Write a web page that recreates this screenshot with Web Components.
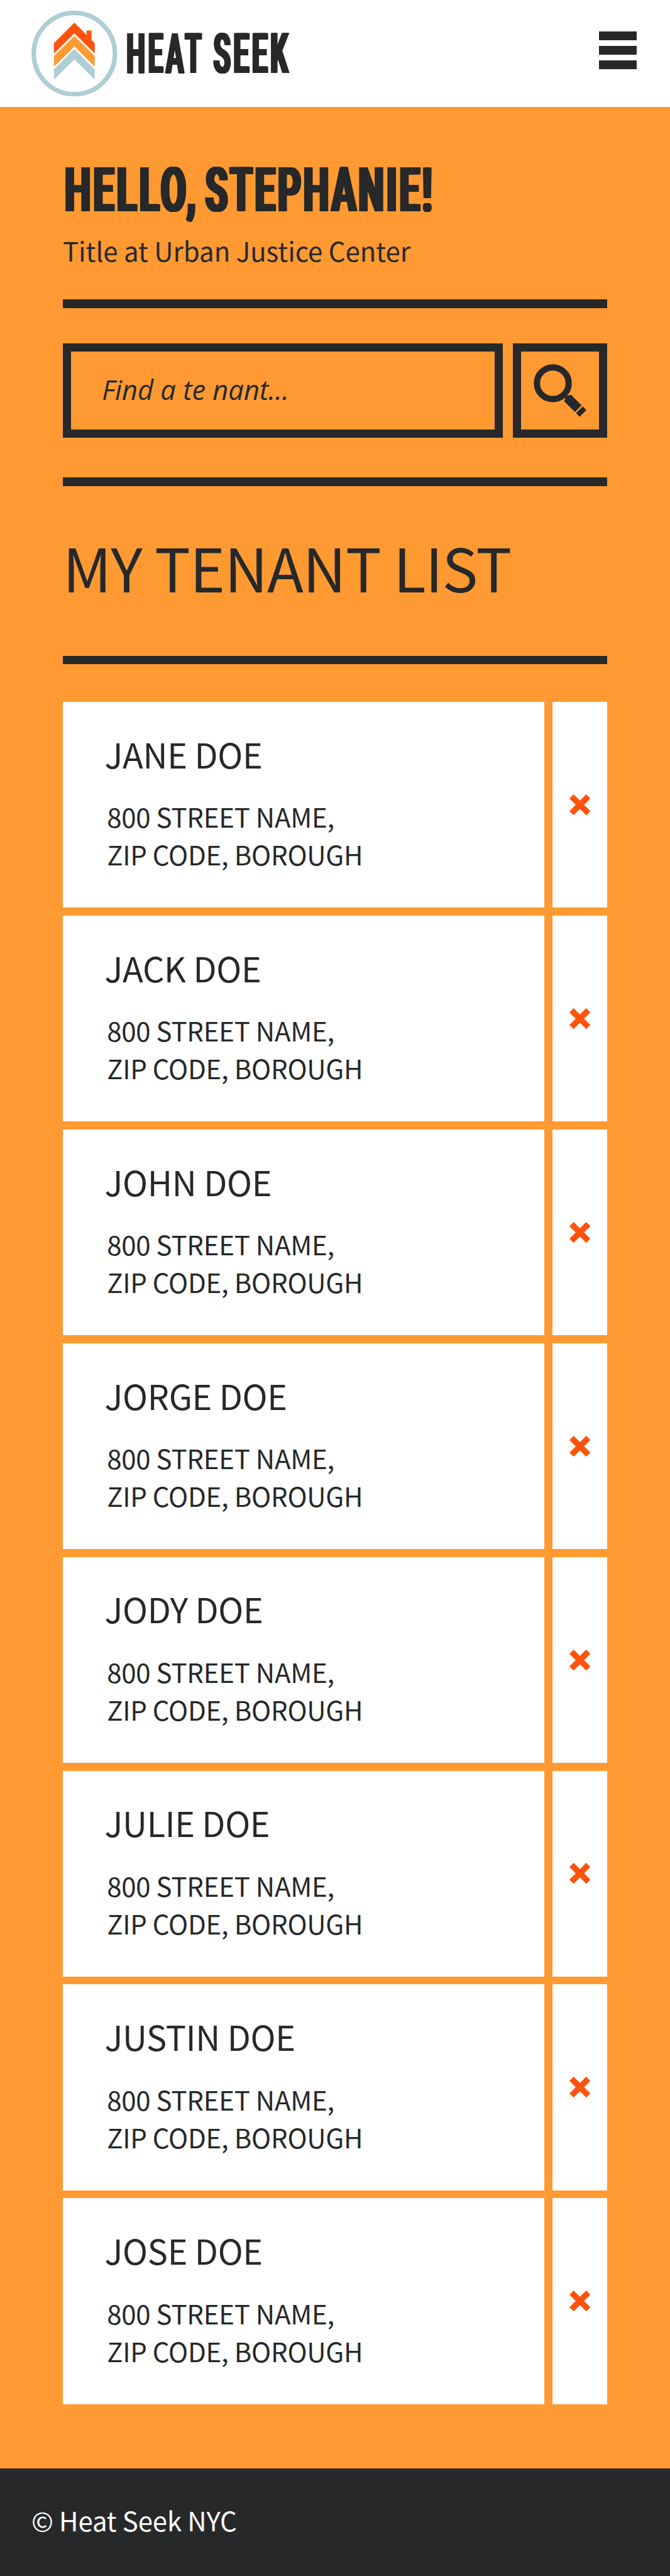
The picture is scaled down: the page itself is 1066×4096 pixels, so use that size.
<!DOCTYPE html>
<html lang="en">
<head>
<meta charset="utf-8">
<title>Heat Seek</title>
<style>
/* .1rem is one unit of a 320-unit wide mobile layout */
html{font-size:33.3125px;--ink:#262829;--orange:#ff9a32;--red:#ff530d;--blue:#afcdd5}
body{margin:0;background:var(--orange);color:var(--ink);font-family:"Noto Sans CJK SC","Source Sans Pro","Open Sans",sans-serif}
</style>
</head>
<body>
<heat-app></heat-app>
<script>
function define(name, html, setup) {
  customElements.define(name, class extends HTMLElement {
    connectedCallback() {
      if (this.shadowRoot) return;
      const t = document.createElement('template');
      t.innerHTML = html;
      this.attachShadow({mode: 'open'}).append(t.content.cloneNode(true));
      if (setup) setup(this, this.shadowRoot);
    }
  });
}

/* Text squeezed so its ink fills the host's width, its baseline on the host's bottom edge */
define('fit-text', `<style>
:host{display:block;white-space:nowrap;flex:none}
span{display:block;width:max-content;line-height:1;transform-origin:0 0;text-shadow:var(--thicken,none)}
</style><span></span>`, (el, root) => {
  const u = 3.33125, s = root.querySelector('span'), text = el.getAttribute('text');
  s.textContent = text;
  const w = el.getAttribute('w') * u, cap = el.getAttribute('cap') * u;
  el.style.width = w + 'px';
  el.style.height = cap + 'px';
  const cs = getComputedStyle(el);
  const ctx = document.createElement('canvas').getContext('2d');
  ctx.font = `${cs.fontStyle} ${cs.fontWeight} 100px ${cs.fontFamily}`;
  const size = cap / ctx.measureText('H').actualBoundingBoxAscent * 100;
  s.style.fontSize = size + 'px';
  const m = ctx.measureText(text), k = size / 100;
  const extra = +(el.getAttribute('extra') || 0), ls = +(el.getAttribute('spacing') || 0);
  s.style.letterSpacing = ls + 'px';
  const ink = (m.actualBoundingBoxLeft + m.actualBoundingBoxRight) * k + 2 * extra + ls * (text.length - 1);
  const sx = w / ink;
  const base = size / 2 + (m.fontBoundingBoxAscent - m.fontBoundingBoxDescent) * k / 2;
  s.style.transform = `translate(${(m.actualBoundingBoxLeft * k + extra) * sx}px,${cap - base}px) scaleX(${sx})`;
});

define('heat-logo', `<style>
:host{display:flex;align-items:flex-start}
svg{width:4.1rem;height:4.1rem;display:block}
.name{display:flex;gap:.5rem;padding:1.1rem 0 0 .475rem;font-family:Roboto,sans-serif;font-weight:700;--thicken:3.8px 0 currentColor,-3.8px 0 currentColor,1.9px 0 currentColor,-1.9px 0 currentColor}
</style>
<svg viewBox="62.5 20.8 170.8 170.8">
<circle cx="147.9" cy="106.2" r="80.8" fill="none" stroke="var(--blue)" stroke-width="9.1"/>
<path fill="var(--red)" d="M148 44.7 172.3 69V60.3H182.1V79L188.4 85.3V105.7L148 65.7 107.3 105.7V85.3Z"/>
<path fill="var(--orange)" d="M148 71 188.4 111V132L148 92 107.3 132V111Z"/>
<path fill="var(--blue)" d="M148 96.8 188.4 137.3V157.8L148 117.6 107.3 157.8V137.3Z"/>
</svg>
<div class="name"><fit-text text="HEAT" w="36" cap="19.05" extra="3.8" spacing="10"></fit-text><fit-text text="SEEK" w="36.6" cap="19.05" extra="3.8" spacing="9"></fit-text></div>`);

define('menu-button', `<style>
:host{display:flex;flex-direction:column;gap:.28rem;width:1.81rem}
i{display:block;height:.42rem;background:var(--ink)}
</style><i></i><i></i><i></i>`);

define('site-header', `<style>
:host{display:flex;justify-content:space-between;align-items:flex-start;box-sizing:border-box;height:5.1rem;padding:.5rem 1.58rem 0 1.5rem;background:#fff}
menu-button{margin-top:.99rem}
</style><heat-logo></heat-logo><menu-button></menu-button>`);

define('thick-rule', `<style>:host{display:block;height:.4rem;background:var(--ink)}</style>`);

define('user-greeting', `<style>
:host{display:block}
h1{display:flex;gap:.451rem;margin:0 0 .943rem .112rem;font:700 16px Roboto,sans-serif;--thicken:4.4px 0 currentColor,-4.4px 0 currentColor,2.2px 0 currentColor,-2.2px 0 currentColor}
p{margin:0;font-size:1.26rem;line-height:1.8rem}
</style>
<h1><fit-text text="HELLO," w="62.1" cap="21.13" extra="4.4" spacing="7.5"></fit-text><fit-text text="STEPHANIE!" w="108.4" cap="21.13" extra="4.4" spacing="7"></fit-text></h1>
<p><slot></slot></p>`);

define('tenant-search', `<style>
:host{display:flex;gap:.5rem}
div{box-sizing:border-box;height:4.5rem;border:.4rem solid var(--ink)}
.field{width:21rem;padding:1.365rem 0 0 1.545rem;font-family:"Open Sans",sans-serif;font-style:italic}
.go{width:4.5rem;display:flex;align-items:center;justify-content:center}
svg{width:2.52rem;height:2.52rem;display:block}
</style>
<div class="field"><fit-text text="Find a te nant..." w="87.4" cap="9.3"></fit-text></div>
<div class="go"><svg viewBox="186 164 315 315" fill="var(--ink)">
<circle cx="300.5" cy="278" r="94.7" fill="none" stroke="var(--ink)" stroke-width="37.5"/>
<path d="M370 357 386 353 410 347 472 410 433 450 369 386 375 363ZM480 416 501 438 461 478 439 456Z"/></svg></div>`);

define('remove-button', `<style>
:host{display:flex;align-items:center;justify-content:center;background:#fff;width:2.6rem}
svg{width:1rem;height:1rem;display:block}
</style><svg viewBox="0 0 10 10"><path fill="var(--red)" d="M2 0 5 3 8 0 10 2 7 5 10 8 8 10 5 7 2 10 0 8 3 5 0 2Z"/></svg>`);

define('tenant-card', `<style>
:host{display:flex;gap:.4rem;height:9.82rem}
article{box-sizing:border-box;width:23rem;background:#fff;padding:1.285rem 0 0 2rem}
h3{margin:0;font-weight:400;font-size:1.62rem;line-height:2.4rem;letter-spacing:-.006em}
p{margin:.89rem 0 0 .11rem;font-size:1.26rem;line-height:1.8rem;letter-spacing:-.0055em}
</style><article><h3><slot></slot></h3><p>800 STREET NAME,<br>ZIP CODE, BOROUGH</p></article><remove-button></remove-button>`);

define('site-footer', `<style>
:host{display:block;box-sizing:border-box;background:var(--ink);color:#fff;padding:1.54rem 1.5rem 0;font-size:1.26rem;line-height:1.8rem;letter-spacing:-.003em}
</style><slot></slot>`);

define('heat-app', `<style>
:host{display:flex;flex-direction:column;height:4096px}
main{box-sizing:border-box;height:112.735rem;padding:2.894rem 3rem 0;flex:none}
user-greeting{margin-bottom:1.45rem}
tenant-search{margin:1.7rem 0 1.9rem}
h2{margin:1.83rem 0 2.27rem;font-weight:400;font-size:2.86rem;line-height:4rem;letter-spacing:-.011em}
.list{margin-top:1.805rem;display:flex;flex-direction:column;gap:.384rem}
site-footer{flex:1}
</style>
<site-header></site-header>
<main>
<user-greeting>Title at Urban Justice Center</user-greeting>
<thick-rule></thick-rule>
<tenant-search></tenant-search>
<thick-rule></thick-rule>
<h2>MY TENANT LIST</h2>
<thick-rule></thick-rule>
<div class="list">
<tenant-card>JANE DOE</tenant-card>
<tenant-card>JACK DOE</tenant-card>
<tenant-card>JOHN DOE</tenant-card>
<tenant-card>JORGE DOE</tenant-card>
<tenant-card>JODY DOE</tenant-card>
<tenant-card>JULIE DOE</tenant-card>
<tenant-card>JUSTIN DOE</tenant-card>
<tenant-card>JOSE DOE</tenant-card>
</div>
</main>
<site-footer>© Heat Seek NYC</site-footer>`);
</script>
</body>
</html>
